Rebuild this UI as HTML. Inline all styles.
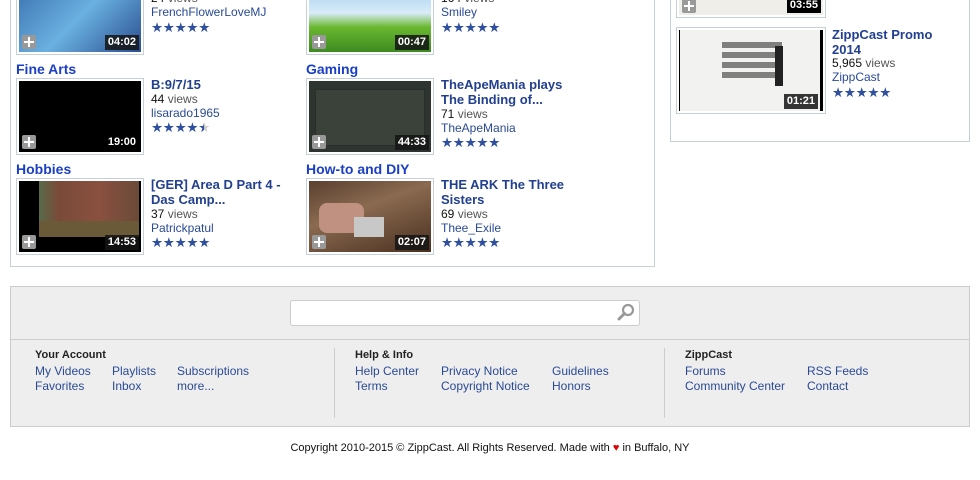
<!DOCTYPE html>
<html><head><meta charset="utf-8"><style>
*{margin:0;padding:0;box-sizing:border-box}
body{width:980px;height:480px;background:#fff;position:relative;overflow:hidden;font-family:"Liberation Sans",Arial,sans-serif}
.a{position:absolute;white-space:nowrap}
.panel{position:absolute;border:1px solid #c5d0da;background:#fff}
.cat{position:absolute;font-weight:bold;font-size:14px;color:#1a3fc4}
.box{position:absolute;width:128px;height:77px;border:1px solid #c5d0da;background:#fff}
.img{position:absolute;left:2px;top:2px;width:122px;height:71px;background:#000;overflow:hidden}
.dur{position:absolute;right:2px;bottom:2px;background:rgba(20,20,20,.85);color:#fff;font-size:11px;font-weight:bold;padding:1px 3px;line-height:13px}
.plus{position:absolute;left:3px;bottom:3px;width:14px;height:14px;background:#999;border-radius:2px}
.plus:before{content:"";position:absolute;left:6px;top:2px;width:2px;height:10px;background:#fff}
.plus:after{content:"";position:absolute;left:2px;top:6px;width:10px;height:2px;background:#fff}
.t{position:absolute;font-weight:bold;font-size:13px;color:#22408f;line-height:15px;white-space:nowrap}
.v{position:absolute;font-size:12px;color:#555;white-space:nowrap}
.v b{font-weight:normal;color:#111}
.u{position:absolute;font-size:12px;color:#2a4a96;white-space:nowrap}
.s{position:absolute;font-size:13.5px;color:#2f4f9f;letter-spacing:-0.3px;white-space:nowrap;line-height:13px}
.f{position:absolute;font-size:12px;color:#2a4a96;white-space:nowrap}
.fh{position:absolute;font-size:11px;font-weight:bold;color:#222;white-space:nowrap}
</style></head><body>

<div class="panel" style="left:10px;top:-10px;width:645px;height:277px"></div>
<div class="panel" style="left:670px;top:-10px;width:300px;height:152px"></div>

<div class="box" style="left:16px;top:-22px"><div class="img" style="background:linear-gradient(135deg,#3a6fb0,#6ab0e0 50%,#2a4f90)"><div class="plus"></div><div class="dur">04:02</div></div></div>
<div class="v" style="left:151px;top:-9px"><b>24</b> views</div>
<div class="u" style="left:151px;top:5px">FrenchFlowerLoveMJ</div>
<div class="s" style="left:151px;top:21px">★★★★★</div>

<div class="box" style="left:306px;top:-22px"><div class="img" style="background:linear-gradient(180deg,#9cc8ee 0%,#d8ecf8 45%,#6ab830 65%,#3d8a20)"><div class="plus"></div><div class="dur">00:47</div></div></div>
<div class="v" style="left:441px;top:-9px"><b>164</b> views</div>
<div class="u" style="left:441px;top:5px">Smiley</div>
<div class="s" style="left:441px;top:21px">★★★★★</div>

<div class="cat" style="left:16px;top:61px">Fine Arts</div>
<div class="box" style="left:16px;top:78px"><div class="img"><div class="plus"></div><div class="dur" style="background:#000">19:00</div></div></div>
<div class="t" style="left:151px;top:77px">B:9/7/15</div>
<div class="v" style="left:151px;top:92px"><b>44</b> views</div>
<div class="u" style="left:151px;top:106px">lisarado1965</div>
<div class="s" style="left:151px;top:121px">★★★★<span style="background:linear-gradient(90deg,#2f4f9f 50%,#ccc 50%);-webkit-background-clip:text;color:transparent">★</span></div>

<div class="cat" style="left:306px;top:61px">Gaming</div>
<div class="box" style="left:306px;top:78px"><div class="img" style="background:#2e3530"><div style="position:absolute;left:6px;top:8px;right:6px;bottom:6px;background:#3a423a;border:1px solid #2a2e2a"></div><div class="plus"></div><div class="dur">44:33</div></div></div>
<div class="t" style="left:441px;top:77px">TheApeMania plays<br>The Binding of...</div>
<div class="v" style="left:441px;top:107px"><b>71</b> views</div>
<div class="u" style="left:441px;top:121px">TheApeMania</div>
<div class="s" style="left:441px;top:136px">★★★★★</div>

<div class="cat" style="left:16px;top:161px">Hobbies</div>
<div class="box" style="left:16px;top:178px"><div class="img"><div style="position:absolute;left:20px;top:0;width:100px;height:56px;background:linear-gradient(90deg,#5a6a4a 0%,#7a4a38 20%,#8a5040 60%,#6a4a38 100%)"></div><div style="position:absolute;left:20px;top:40px;width:100px;height:16px;background:#6a5a38"></div><div class="plus"></div><div class="dur">14:53</div></div></div>
<div class="t" style="left:151px;top:177px">[GER] Area D Part 4 -<br>Das Camp...</div>
<div class="v" style="left:151px;top:207px"><b>37</b> views</div>
<div class="u" style="left:151px;top:221px">Patrickpatul</div>
<div class="s" style="left:151px;top:236px">★★★★★</div>

<div class="cat" style="left:306px;top:161px">How-to and DIY</div>
<div class="box" style="left:306px;top:178px"><div class="img" style="background:linear-gradient(160deg,#5a4030,#8a6a50 40%,#4a3020)"><div style="position:absolute;left:10px;top:22px;width:45px;height:30px;background:#c09080;border-radius:8px"></div><div style="position:absolute;left:45px;top:36px;width:30px;height:20px;background:#c8c8c8"></div><div class="plus"></div><div class="dur">02:07</div></div></div>
<div class="t" style="left:441px;top:177px">THE ARK The Three<br>Sisters</div>
<div class="v" style="left:441px;top:207px"><b>69</b> views</div>
<div class="u" style="left:441px;top:221px">Thee_Exile</div>
<div class="s" style="left:441px;top:236px">★★★★★</div>

<div class="box" style="left:676px;top:-40px;width:150px;height:58px"><div class="img" style="width:144px;height:52px;background:#f0eee8"><div class="plus" style="bottom:2px"></div><div class="dur" style="background:#000">03:55</div></div></div>
<div class="box" style="left:676px;top:27px;width:150px;height:87px"><div class="img" style="width:144px;height:81px;background:#f2f2f0;border-right:3px solid #000;border-left:1px solid #000"><div style="position:absolute;left:42px;top:12px;width:60px;height:40px;background:repeating-linear-gradient(180deg,#333 0 6px,#f2f2f0 6px 10px);opacity:.6"></div><div style="position:absolute;left:95px;top:16px;width:8px;height:40px;background:#222"></div><div class="dur">01:21</div></div></div>
<div class="t" style="left:832px;top:27px">ZippCast Promo<br>2014</div>
<div class="v" style="left:832px;top:56px"><b>5,965</b> views</div>
<div class="u" style="left:832px;top:70px">ZippCast</div>
<div class="s" style="left:832px;top:86px">★★★★★</div>

<div style="position:absolute;left:10px;top:286px;width:960px;height:141px;background:#eee;border:1px solid #ccc"></div>
<div style="position:absolute;left:11px;top:339px;width:958px;height:1px;background:#ccc"></div>
<div style="position:absolute;left:290px;top:300px;width:350px;height:26px;background:#fff;border:1px solid #ccc;border-radius:3px"></div>
<svg class="a" style="left:616px;top:303px" width="20" height="18" viewBox="0 0 20 18"><circle cx="12" cy="7" r="5" fill="none" stroke="#999" stroke-width="2.2"/><line x1="8.5" y1="10.5" x2="3" y2="16" stroke="#999" stroke-width="3" stroke-linecap="round"/></svg>
<div style="position:absolute;left:334px;top:348px;width:1px;height:70px;background:#ccc"></div>
<div style="position:absolute;left:664px;top:348px;width:1px;height:70px;background:#ccc"></div>

<div class="fh" style="left:35px;top:349px">Your Account</div>
<div class="f" style="left:35px;top:364px">My Videos</div>
<div class="f" style="left:35px;top:379px">Favorites</div>
<div class="f" style="left:112px;top:364px">Playlists</div>
<div class="f" style="left:112px;top:379px">Inbox</div>
<div class="f" style="left:177px;top:364px">Subscriptions</div>
<div class="f" style="left:177px;top:379px">more...</div>

<div class="fh" style="left:355px;top:349px">Help &amp; Info</div>
<div class="f" style="left:355px;top:364px">Help Center</div>
<div class="f" style="left:355px;top:379px">Terms</div>
<div class="f" style="left:441px;top:364px">Privacy Notice</div>
<div class="f" style="left:441px;top:379px">Copyright Notice</div>
<div class="f" style="left:552px;top:364px">Guidelines</div>
<div class="f" style="left:552px;top:379px">Honors</div>

<div class="fh" style="left:685px;top:349px">ZippCast</div>
<div class="f" style="left:685px;top:364px">Forums</div>
<div class="f" style="left:685px;top:379px">Community Center</div>
<div class="f" style="left:807px;top:364px">RSS Feeds</div>
<div class="f" style="left:807px;top:379px">Contact</div>

<div class="a" style="left:0;width:980px;top:442px;text-align:center;font-size:11px;color:#111;">Copyright 2010-2015 © ZippCast. All Rights Reserved. Made with <span style="color:#d00">♥</span> in Buffalo, NY</div>
</body></html>
